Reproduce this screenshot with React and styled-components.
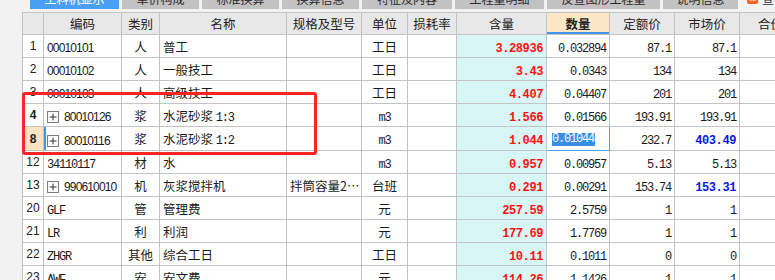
import React from "react";
import styled, { createGlobalStyle } from "styled-components";

const GlobalStyle = createGlobalStyle`
  html, body { margin: 0; padding: 0; }
  body {
    background: #f2f2f2;
    overflow: hidden;
    font-family: "Noto Sans CJK SC", "Liberation Sans", sans-serif;
    font-size: 12px;
    color: #1a1a1a;
  }
`;

const Page = styled.div`
  width: 775px;
  height: 280px;
  overflow: hidden;
  background: #f2f2f2;
`;

const TabBar = styled.div`
  display: flex;
  align-items: flex-end;
  gap: 3px;
  height: 9px;
  padding-left: 30px;
  overflow: hidden;
`;

const Tab = styled.div`
  flex: none;
  width: ${(p) => p.$w}px;
  height: 22px;
  display: flex;
  align-items: center;
  justify-content: center;
  font-size: 12px;
  white-space: nowrap;
  background: ${(p) => (p.$active ? "#4a9ff2" : "#c2c2c2")};
  color: ${(p) => (p.$active ? "#ffffff" : "#2a2a2a")};
`;

const ToolItem = styled.div`
  flex: none;
  height: 22px;
  display: flex;
  align-items: center;
  gap: 4px;
  padding-left: 6px;
  font-size: 12px;
  color: #333;
  white-space: nowrap;
`;

const GridWrap = styled.div`
  position: relative;
  margin: 3px 0 0 22px;
  width: 780px;
`;

const Grid = styled.table`
  border-collapse: collapse;
  table-layout: fixed;
  width: 779px;
  background: #ffffff;
`;

const HeadCell = styled.th`
  height: 21px;
  padding: 0 2px;
  border: 1px solid #c4c4c4;
  background: ${(p) => (p.$accent ? "#fde6c8" : "#e8e8e8")};
  box-shadow: ${(p) => (p.$accent ? "inset 0 -2px 0 #3f95ee" : "none")};
  font-weight: ${(p) => (p.$accent ? 700 : 400)};
  font-size: 12.5px;
  color: #222;
  text-align: center;
  white-space: nowrap;
  overflow: hidden;
`;

const RowNum = styled.td`
  height: 22px;
  padding: 0;
  border: 1px solid #c4c4c4;
  background: ${(p) => (p.$active ? "#fde3c3" : "#ffffff")};
  font-family: "Liberation Sans", sans-serif;
  font-size: 12px;
  font-weight: ${(p) => (p.$bold ? 700 : 400)};
  text-align: center;
  color: #222;
`;

const Cell = styled.td`
  height: 22px;
  padding: 0 ${(p) => (p.$align === "right" ? 3 : 2)}px 0 ${(p) => (p.$align === "left" ? 3 : 2)}px;
  border: 1px solid #c4c4c4;
  background: ${(p) => p.$bg || "#ffffff"};
  text-align: ${(p) => p.$align || "left"};
  white-space: nowrap;
  overflow: hidden;
  color: ${(p) => p.$color || "#1a1a1a"};
  font-weight: ${(p) => (p.$bold ? 700 : 400)};
  font-size: 12.5px;
  box-shadow: ${(p) => (p.$marked ? "inset 2px 0 0 #3f95ee" : "none")};
`;

const Mono = styled.span`
  font-family: "Liberation Mono", "DejaVu Sans Mono", monospace;
  font-size: 12px;
  letter-spacing: ${(p) => (p.$bold ? "-0.4px" : "-1.2px")};
  font-weight: ${(p) => (p.$bold ? 700 : 400)};
`;

const Code = styled.span`
  font-family: "Liberation Sans", sans-serif;
  font-size: 12px;
  letter-spacing: -0.85px;
`;

const CodeWrap = styled.span`
  display: inline-flex;
  align-items: center;
  gap: 5px;
  vertical-align: middle;
`;

const ExpandBox = styled.span`
  display: inline-flex;
  width: 12px;
  height: 12px;
  border: 1px solid #7c7c7c;
  box-sizing: border-box;
  align-items: center;
  justify-content: center;
  background: #fff;
`;

const EditCell = styled.td`
  height: 22px;
  padding: 1px 0 0 5px;
  border: 1px solid #4a9ff2;
  vertical-align: top;
  background: #ffffff;
  white-space: nowrap;
  overflow: hidden;
`;

const Selection = styled.span`
  display: inline-block;
  background: #3a8ee6;
  color: #ffffff;
  line-height: 13px;
  font-family: "Liberation Mono", "DejaVu Sans Mono", monospace;
  font-size: 12px;
  letter-spacing: -1.2px;
  padding-right: 1px;
`;

const Callout = styled.div`
  position: absolute;
  left: 0;
  top: 80px;
  width: 295px;
  height: 63px;
  box-sizing: border-box;
  border: 3px solid #fe2424;
  border-radius: 3px;
  pointer-events: none;
`;

const tabs = [
  ["工料机显示", 89, true],
  ["单价构成", 77],
  ["标准换算", 77],
  ["换算信息", 77],
  ["特征及内容", 90],
  ["工程量明细", 89],
  ["反查图形工程量", 113],
  ["说明信息", 75],
];

const cols = [21, 78, 38, 127, 75, 46, 49, 90, 63, 65, 65, 62];
const heads = ["", "编码", "类别", "名称", "规格及型号", "单位", "损耗率", "含量", "数量", "定额价", "市场价", "合价"];

const rows = [
  { n: "1", code: "00010101", kind: "人", name: "普工", unit: "工日", qty: "3.28936", amt: "0.032894", quota: "87.1", market: "87.1" },
  { n: "2", code: "00010102", kind: "人", name: "一般技工", unit: "工日", qty: "3.43", amt: "0.0343", quota: "134", market: "134" },
  { n: "3", code: "00010103", kind: "人", name: "高级技工", unit: "工日", qty: "4.407", amt: "0.04407", quota: "201", market: "201" },
  { n: "4", code: "80010126", exp: true, bold: true, kind: "浆", name: "水泥砂浆", ratio: "1:3", unit: "m3", monoUnit: true, qty: "1.566", amt: "0.01566", quota: "193.91", market: "193.91" },
  { n: "8", code: "80010116", exp: true, bold: true, active: true, kind: "浆", name: "水泥砂浆", ratio: "1:2", unit: "m3", monoUnit: true, qty: "1.044", amt: "0.01044", edit: true, quota: "232.7", market: "403.49", blue: true },
  { n: "12", code: "34110117", monoCode: true, kind: "材", name: "水", unit: "m3", monoUnit: true, qty: "0.957", amt: "0.00957", quota: "5.13", market: "5.13" },
  { n: "13", code: "990610010", exp: true, kind: "机", name: "灰浆搅拌机", spec: "拌筒容量2…", unit: "台班", qty: "0.291", amt: "0.00291", quota: "153.74", market: "153.31", blue: true },
  { n: "20", code: "GLF", monoCode: true, kind: "管", name: "管理费", unit: "元", qty: "257.59", amt: "2.5759", quota: "1", market: "1" },
  { n: "21", code: "LR", monoCode: true, kind: "利", name: "利润", unit: "元", qty: "177.69", amt: "1.7769", quota: "1", market: "1" },
  { n: "22", code: "ZHGR", monoCode: true, kind: "其他", name: "综合工日", unit: "工日", qty: "10.11", amt: "0.1011", quota: "0", market: "0" },
  { n: "23", code: "AWF", monoCode: true, kind: "安", name: "安文费", unit: "元", qty: "114.26", amt: "1.1426", quota: "1", market: "1" },
];

function PlusIcon() {
  return (
    <svg width="10" height="10" viewBox="0 0 10 10">
      <path d="M1.5 5H8.5M5 1.5V8.5" stroke="#333" strokeWidth="1" />
    </svg>
  );
}

function CodeCell({ r }) {
  const text = r.monoCode ? <Mono>{r.code}</Mono> : <Code>{r.code}</Code>;
  return (
    <Cell $align="left" $marked={r.active}>
      {r.exp ? (
        <CodeWrap>
          <ExpandBox>
            <PlusIcon />
          </ExpandBox>
          {text}
        </CodeWrap>
      ) : (
        text
      )}
    </Cell>
  );
}

export default function App() {
  return (
    <Page>
      <GlobalStyle />
      <TabBar>
        {tabs.map(([t, w, a]) => (
          <Tab key={t} $w={w} $active={a}>
            {t}
          </Tab>
        ))}
        <ToolItem>
          <svg width="11" height="12" viewBox="0 0 11 12">
            <rect x="0" y="0" width="11" height="12" rx="2" fill="#f4622a" />
            <path d="M2 8h7M2 5h7" stroke="#fff" strokeWidth="1" />
          </svg>
          <span>查询</span>
        </ToolItem>
      </TabBar>
      <GridWrap>
        <Grid>
          <colgroup>
            {cols.map((w, i) => (
              <col key={i} style={{ width: w }} />
            ))}
          </colgroup>
          <thead>
            <tr>
              {heads.map((h, i) => (
                <HeadCell key={i} $accent={h === "数量"}>
                  {h}
                </HeadCell>
              ))}
            </tr>
          </thead>
          <tbody>
            {rows.map((r) => (
              <tr key={r.n}>
                <RowNum $bold={r.bold} $active={r.active}>
                  {r.n}
                </RowNum>
                <CodeCell r={r} />
                <Cell $align="center">{r.kind}</Cell>
                <Cell $align="left">
                  {r.name}
                  {r.ratio && (
                    <>
                      {" "}
                      <Mono>{r.ratio}</Mono>
                    </>
                  )}
                </Cell>
                <Cell $align="left">{r.spec || ""}</Cell>
                <Cell $align="center">{r.monoUnit ? <Mono>{r.unit}</Mono> : r.unit}</Cell>
                <Cell />
                <Cell $align="right" $bg="#d9f6f7" $color="#ff1010">
                  <Mono $bold>{r.qty}</Mono>
                </Cell>
                {r.edit ? (
                  <EditCell>
                    <Selection>{r.amt}</Selection>
                  </EditCell>
                ) : (
                  <Cell $align="right">
                    <Mono>{r.amt}</Mono>
                  </Cell>
                )}
                <Cell $align="right">
                  <Mono>{r.quota}</Mono>
                </Cell>
                <Cell $align="right" $color={r.blue ? "#0a14f0" : undefined}>
                  <Mono $bold={r.blue}>{r.market}</Mono>
                </Cell>
                <Cell />
              </tr>
            ))}
          </tbody>
        </Grid>
        <Callout />
      </GridWrap>
    </Page>
  );
}
